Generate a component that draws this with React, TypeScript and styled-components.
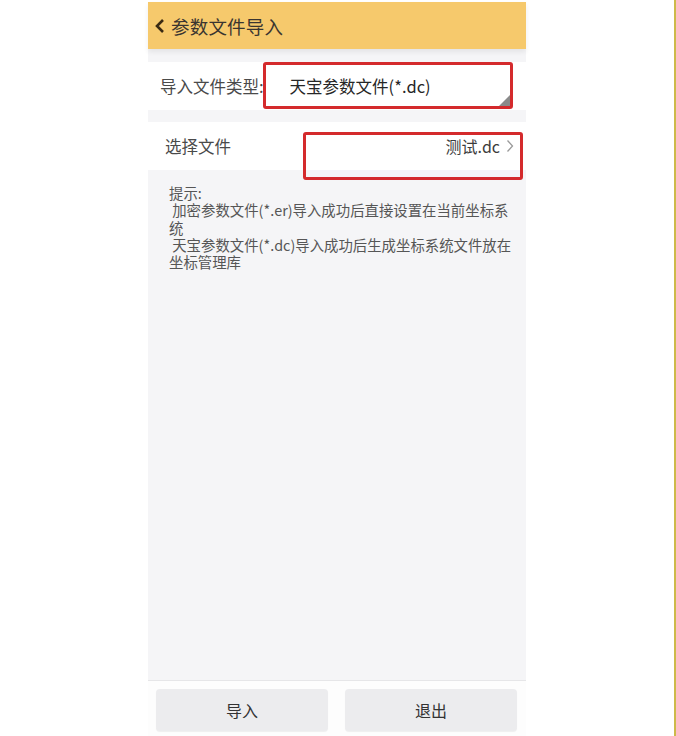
import styled, { createGlobalStyle } from "styled-components";

const GlobalStyle = createGlobalStyle`
  html, body {
    margin: 0;
    padding: 0;
    background: #fff;
  }
  body {
    font-family: "Noto Sans CJK SC", "Noto Sans", sans-serif;
  }
`;

const Stage = styled.div`
  width: 674px;
  height: 736px;
  border-right: 2px solid #cdb94a;
  display: flex;
  overflow: hidden;
`;

const Phone = styled.div`
  margin: 2px 0 0 148px;
  width: 378px;
  height: 734px;
  display: flex;
  flex-direction: column;
  background: #f5f5f7;
`;

const Header = styled.div`
  height: 47px;
  flex-shrink: 0;
  background: #f6c96c;
  display: flex;
  align-items: center;
  padding-left: 7px;
  gap: 6px;
  box-shadow: 0 3px 5px rgba(0, 0, 0, 0.07);
  position: relative;
  z-index: 1;
`;

const Title = styled.div`
  font-size: 18.5px;
  color: #3a3530;
  letter-spacing: 0.2px;
`;

const Content = styled.div`
  flex: 1;
  padding-top: 13px;
  display: flex;
  flex-direction: column;
`;

const Row = styled.div<{ $pad: number; $gap?: number }>`
  position: relative;
  height: 48px;
  background: #fff;
  display: flex;
  align-items: center;
  padding-left: ${(p) => p.$pad}px;
  margin-bottom: ${(p) => p.$gap ?? 0}px;
`;

const Label = styled.div`
  font-size: 16.5px;
  color: #4a4a4a;
  white-space: nowrap;
`;

const Spinner = styled.div`
  position: relative;
  flex: 1;
  align-self: stretch;
  display: flex;
  align-items: center;
  padding-left: 26px;
  margin-right: 16px;
  font-size: 16.5px;
  color: #262626;

  &::after {
    content: "";
    position: absolute;
    right: 0;
    bottom: 4px;
    width: 0;
    height: 0;
    border-left: 11px solid transparent;
    border-bottom: 11px solid #8a8a8a;
  }
`;

const Picked = styled.div`
  flex: 1;
  display: flex;
  justify-content: flex-end;
  align-items: center;
  gap: 6px;
  padding-right: 12px;
  font-size: 16px;
  color: #3c3c3c;
`;

const Mark = styled.div<{ $left: number; $top: number; $w: number; $h: number }>`
  position: absolute;
  left: ${(p) => p.$left}px;
  top: ${(p) => p.$top}px;
  width: ${(p) => p.$w}px;
  height: ${(p) => p.$h}px;
  box-sizing: border-box;
  border: 3px solid #d42a2c;
  border-radius: 3px;
  pointer-events: none;
`;

const Hint = styled.div`
  margin: 14px 0 0 21px;
  font-size: 14.4px;
  line-height: 17.3px;
  color: #565656;
  white-space: pre;
`;

const Footer = styled.div`
  height: 56px;
  flex-shrink: 0;
  border-top: 1px solid #e6e6e8;
  background: #fdfdfd;
  display: flex;
  gap: 17px;
  padding: 8px 9px 0 8px;
  box-sizing: border-box;
`;

const Button = styled.div`
  width: 172px;
  height: 42px;
  border-radius: 4px;
  background: #ececee;
  box-shadow: 0 1px 1px rgba(0, 0, 0, 0.06);
  display: flex;
  align-items: center;
  justify-content: center;
  font-size: 16px;
  color: #333;
`;

function App() {
  return (
    <>
      <GlobalStyle />
      <Stage>
        <Phone>
          <Header>
            <svg width="10" height="16" viewBox="0 0 10 16">
              <polyline
                points="8,2 2,8 8,14"
                fill="none"
                stroke="#3a2a12"
                strokeWidth="2.6"
              />
            </svg>
            <Title>参数文件导入</Title>
          </Header>
          <Content>
            <Row $pad={12} $gap={12}>
              <Label>导入文件类型:</Label>
              <Spinner>天宝参数文件(*.dc)</Spinner>
              <Mark $left={115} $top={0} $w={250} $h={47} />
            </Row>
            <Row $pad={17}>
              <Label>选择文件</Label>
              <Picked>
                测试.dc
                <svg width="8" height="14" viewBox="0 0 8 14">
                  <polyline
                    points="1.5,1.5 6.5,7 1.5,12.5"
                    fill="none"
                    stroke="#9a9a9a"
                    strokeWidth="1.3"
                  />
                </svg>
              </Picked>
              <Mark $left={155} $top={10} $w={220} $h={48} />
            </Row>
            <Hint>
              {"提示:\n 加密参数文件(*.er)导入成功后直接设置在当前坐标系\n统\n 天宝参数文件(*.dc)导入成功后生成坐标系统文件放在\n坐标管理库"}
            </Hint>
          </Content>
          <Footer>
            <Button>导入</Button>
            <Button>退出</Button>
          </Footer>
        </Phone>
      </Stage>
    </>
  );
}

export default App;
